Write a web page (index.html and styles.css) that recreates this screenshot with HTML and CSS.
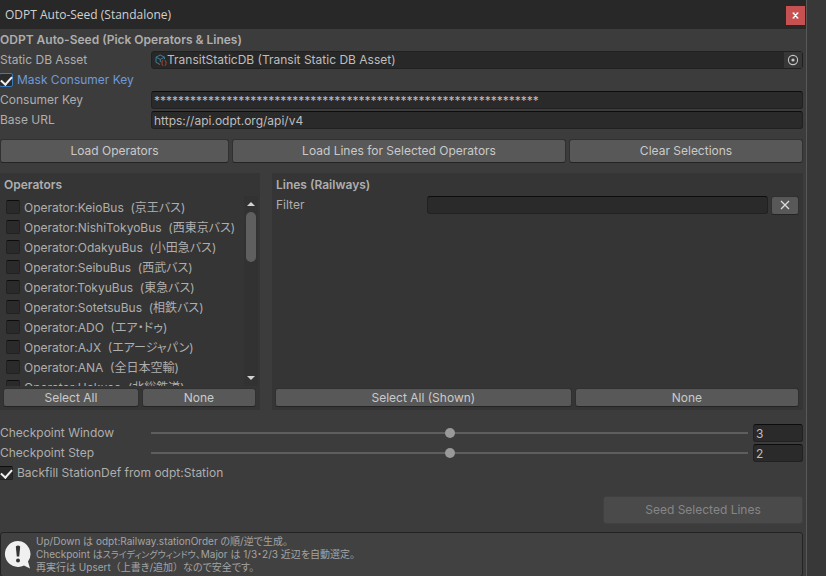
FILE: index.html
```html
<!doctype html>
<html lang="ja">
<head>
	<meta charset="UTF-8">
	<title>ODPT Auto-Seed (Standalone)</title>
	<link rel="stylesheet" href="styles.css">
</head>
<body>
	<div class="window">
		<header class="titlebar">
			<span>ODPT Auto-Seed (Standalone)</span>
			<button class="close" type="button" aria-label="Close">
				<svg width="7" height="7" viewBox="0 0 7 7"><path d="M1.200 1l4.600 5M5.800 1l-4.600 5M0.500 1h2M4.500 1h2M0.500 6h2M4.500 6h2" stroke="#fff" stroke-width="1.2"/></svg>
			</button>
		</header>

		<main class="content">
			<h1 class="heading">ODPT Auto-Seed (Pick Operators &amp; Lines)</h1>
			<div class="row">
				<label class="name" for="asset">Static DB Asset</label>
				<div class="field object">
					<svg width="12" height="12" viewBox="0 0 12 12" fill="none">
						<path d="M5 10.500L1 8.300V3.200L5.200 1l4.300 2.200v2M1 3.200l4.300 2.200 4.200-2.200M5.300 5.400V8" stroke="#3f7f99"/>
						<path d="M8.200 6.500q-1 0-1 1v.8l-.7.7.7.6v.9q0 1 1 1M9.800 6.500q1 0 1 1v.8l.7.7-.7.6v.9q0 1-1 1" stroke="#b84c2a"/>
					</svg>
					<input id="asset" type="text" value="TransitStaticDB (Transit Static DB Asset)" readonly>
					<button class="picker" type="button" aria-label="Select asset">
						<svg width="12" height="12" viewBox="0 0 12 12"><circle cx="6" cy="6" r="4.600" fill="none" stroke="#c4c4c4" stroke-width="1.100"/><circle cx="6" cy="6" r="1.600" fill="#c4c4c4"/></svg>
					</button>
				</div>
			</div>
			<label class="row toggle focused"><input class="check" type="checkbox" checked>Mask Consumer Key</label>
			<div class="row">
				<label class="name" for="key">Consumer Key</label>
				<input class="field" id="key" type="text" value="****************************************************************">
			</div>
			<div class="row">
				<label class="name" for="url">Base URL</label>
				<input class="field" id="url" type="text" value="https://api.odpt.org/api/v4">
			</div>

			<div class="actions">
				<button class="btn load" type="button">Load Operators</button>
				<button class="btn lines" type="button">Load Lines for Selected Operators</button>
				<button class="btn clear" type="button">Clear Selections</button>
			</div>

			<div class="panels">
				<section class="panel operators">
					<h2 class="heading">Operators</h2>
					<div class="scroll">
						<div class="list">
							<label class="row item"><input class="check" type="checkbox">Operator:KeioBus&nbsp; (京王バス)</label>
							<label class="row item"><input class="check" type="checkbox">Operator:NishiTokyoBus&nbsp; (西東京バス)</label>
							<label class="row item"><input class="check" type="checkbox">Operator:OdakyuBus&nbsp; (小田急バス)</label>
							<label class="row item"><input class="check" type="checkbox">Operator:SeibuBus&nbsp; (西武バス)</label>
							<label class="row item"><input class="check" type="checkbox">Operator:TokyuBus&nbsp; (東急バス)</label>
							<label class="row item"><input class="check" type="checkbox">Operator:SotetsuBus&nbsp; (相鉄バス)</label>
							<label class="row item"><input class="check" type="checkbox">Operator:ADO&nbsp; (エア・ドゥ)</label>
							<label class="row item"><input class="check" type="checkbox">Operator:AJX&nbsp; (エアージャパン)</label>
							<label class="row item"><input class="check" type="checkbox">Operator:ANA&nbsp; (全日本空輸)</label>
							<label class="row item"><input class="check" type="checkbox">Operator:Hokuso&nbsp; (北総鉄道)</label>
						</div>
						<div class="scrollbar">
							<svg width="8" height="4" viewBox="0 0 8 4"><path d="M0 4l4-4 4 4z" fill="#d2d2d2"/></svg>
							<div class="thumb"></div>
							<svg width="8" height="4" viewBox="0 0 8 4"><path d="M0 0l4 4 4-4z" fill="#d2d2d2"/></svg>
						</div>
					</div>
					<div class="pair">
						<button class="btn small all" type="button">Select All</button>
						<button class="btn small none" type="button">None</button>
					</div>
				</section>

				<section class="panel railways">
					<h2 class="heading">Lines (Railways)</h2>
					<div class="row filter">
						<label class="name" for="filter">Filter</label>
						<input class="field" id="filter" type="text">
						<button class="btn small reset" type="button" aria-label="Clear filter">
							<svg width="10" height="10" viewBox="0 0 10 10"><path d="M1 1l8 8M9 1l-8 8" stroke="#dcdcdc" stroke-width="1.300"/></svg>
						</button>
					</div>
					<div class="pair">
						<button class="btn small shown" type="button">Select All (Shown)</button>
						<button class="btn small rest" type="button">None</button>
					</div>
				</section>
			</div>

			<div class="row">
				<label class="name" for="window">Checkpoint Window</label>
				<input class="slider" id="window" type="range" min="1" max="5" value="3">
				<input class="field number" type="text" value="3" aria-label="Checkpoint Window value">
			</div>
			<div class="row">
				<label class="name" for="step">Checkpoint Step</label>
				<input class="slider" id="step" type="range" min="1" max="3" value="2">
				<input class="field number" type="text" value="2" aria-label="Checkpoint Step value">
			</div>
			<label class="row toggle"><input class="check" type="checkbox" checked>Backfill StationDef from odpt:Station</label>

			<button class="btn seed" type="button" disabled>Seed Selected Lines</button>

			<div class="help">
				<svg width="28" height="30" viewBox="0 0 28 30">
					<path d="M14 1a13 13 0 1 0 6 24.500l6 3-2-7A13 13 0 0 0 14 1z" fill="#f0f0f0"/>
					<path d="M11.800 6.500q2.200-2 4.400 0l-1 10h-2.400z" fill="#333"/>
					<circle cx="14" cy="20.500" r="2" fill="#333"/>
				</svg>
				<p>Up/Down は odpt:Railway.stationOrder の順/逆で生成。<br>
				Checkpoint は<span class="kana">スライディングウィンドウ</span>、Major は 1/3・2/3 近辺を自動選定。<br>
				再実行は Upsert<span class="wide">（</span>上書き/追加<span class="wide">）</span>なので安全です。</p>
			</div>
		</main>
	</div>
</body>
</html>
```

FILE: styles.css
```css
* {
	box-sizing: border-box;
}
html, body {
	height: 100%;
	overflow: hidden;
}
body {
	margin: 0;
	padding-right: 19px;
	background: #383838;
	color: #aeaeae;
	font: 12px/18px Inter, "Noto Sans CJK JP", sans-serif;
	font-feature-settings: "palt";
}
input, button {
	margin: 0;
	padding: 0;
	border: 0;
	color: inherit;
	font: inherit;
}
.window {
	min-height: 100%;
	background: #3c3c3c;
	border-right: 1px solid #585858;
}

/* title bar */
.titlebar {
	display: flex;
	align-items: center;
	justify-content: space-between;
	height: 29px;
	padding: 0 1px 0 5px;
	background: #282828;
	color: #d0d0d0;
	font-family: "Open Sans", sans-serif;
}
.close {
	display: flex;
	align-items: center;
	justify-content: center;
	width: 19px;
	height: 19px;
	margin-top: 2px;
	background: #c75050;
}

.content {
	padding: 2px 3px 0 0;
}
.heading {
	margin: 0 0 2px;
	font-size: 12px;
	line-height: 18px;
	font-weight: 600;
}
.row {
	display: flex;
	align-items: center;
	height: 18px;
	margin-bottom: 2px;
	white-space: nowrap;
}
.name {
	flex: 0 0 151px;
}
.field {
	flex: 1;
	min-width: 0;
	height: 18px;
	padding: 1px 2px 0;
	background: #2a2a2a;
	border: 1px solid #212121;
	border-top-color: #0d0d0d;
	border-radius: 3px;
	color: #bebebe;
	outline: none;
}
.object {
	display: flex;
	align-items: center;
	padding: 0 0 0 3px;
	border-color: #202020;
	background: #282828;
}
.object input {
	flex: 1;
	min-width: 0;
	background: none;
	outline: none;
}
.picker {
	display: flex;
	align-items: center;
	justify-content: center;
	width: 18px;
	height: 16px;
	background: #373737;
}

/* tick boxes */
.check {
	appearance: none;
	flex: none;
	width: 14px;
	height: 14px;
	background: #2a2a2a;
	border: 1px solid #212121;
	border-top-color: #0d0d0d;
	border-radius: 2px;
}
.check:checked::before {
	content: "";
	display: block;
	width: 9px;
	height: 5px;
	margin: 2px 0 0 2px;
	border: solid #f0f0f0;
	border-width: 0 0 2px 2px;
	transform: rotate(-48deg);
}
.toggle .check {
	display: grid;
	margin: 0 4px 0 -1px;
}
.toggle .check:checked::before {
	margin: 2px 0 0 1px;
}
.focused {
	color: #7099d8;
}
.focused .check {
	border-color: #3a79bb;
}

/* buttons */
.btn {
	height: 24px;
	background: #585858;
	border: 1px solid #303030;
	border-bottom-color: #242424;
	border-radius: 3px;
	color: #cacaca;
	text-align: center;
}
.small {
	height: 19px;
	line-height: 17px;
}
.actions {
	display: flex;
	gap: 3px;
	margin: 10px 0;
}
.load {
	flex: 229;
}
.lines {
	flex: 335;
}
.clear {
	flex: 234;
}

.panels {
	display: flex;
	gap: 12px;
	height: 237px;
	margin-bottom: 14px;
}
.panel {
	display: flex;
	flex-direction: column;
	padding: 3px 4px 3px 3px;
	background: #353535;
}
.operators {
	flex: 0 0 260px;
}
.railways {
	flex: 1;
}
.panel .heading {
	padding-left: 1px;
}
.pair {
	display: flex;
	gap: 3px;
	margin-top: auto;
}
.all {
	flex: 136;
}
.none {
	flex: 114;
}
.shown {
	flex: 297;
}
.rest {
	flex: 224;
}
.scroll {
	display: flex;
	height: 190px;
	margin-right: -2px;
}
.list {
	flex: 1;
	padding: 3px 0 0 3px;
	overflow: hidden;
}
.item .check {
	margin: 0 4px 2px 0;
}
.scrollbar {
	display: flex;
	flex-direction: column;
	align-items: center;
	width: 14px;
	padding: 6px 0;
	background: #323232;
}
.thumb {
	width: 10px;
	height: 50px;
	margin: 6px 0 auto;
	background: #5f5f5f;
	border-radius: 5px;
}
.filter .name {
	flex-basis: 152px;
	padding-left: 1px;
}
.reset {
	display: flex;
	align-items: center;
	justify-content: center;
	width: 28px;
	margin-left: 3px;
}

/* sliders */
.slider {
	appearance: none;
	flex: 1;
	min-width: 0;
	height: 10px;
	background: linear-gradient(#5e5e5e, #5e5e5e) center / 100% 2px no-repeat;
}
.slider::-webkit-slider-thumb {
	appearance: none;
	width: 10px;
	height: 10px;
	background: #999;
	border-radius: 50%;
}
.number {
	flex: 0 0 50px;
	margin-left: 5px;
}

.seed {
	display: block;
	width: 200px;
	height: 28px;
	margin: 14px 0 8px auto;
	background: #4a4a4a;
	border-color: #404040;
	color: #868686;
}

/* help box */
.help {
	display: flex;
	align-items: center;
	gap: 4px;
	padding: 2px 3px;
	background: #414141;
	border: 1px solid #232323;
	border-radius: 3px;
	color: #a4a4a4;
	font-size: 10px;
	line-height: 13px;
}
.help p {
	margin: 0;
}
.kana {
	font-size: 9px;
}
.wide {
	font-feature-settings: normal;
}
```
